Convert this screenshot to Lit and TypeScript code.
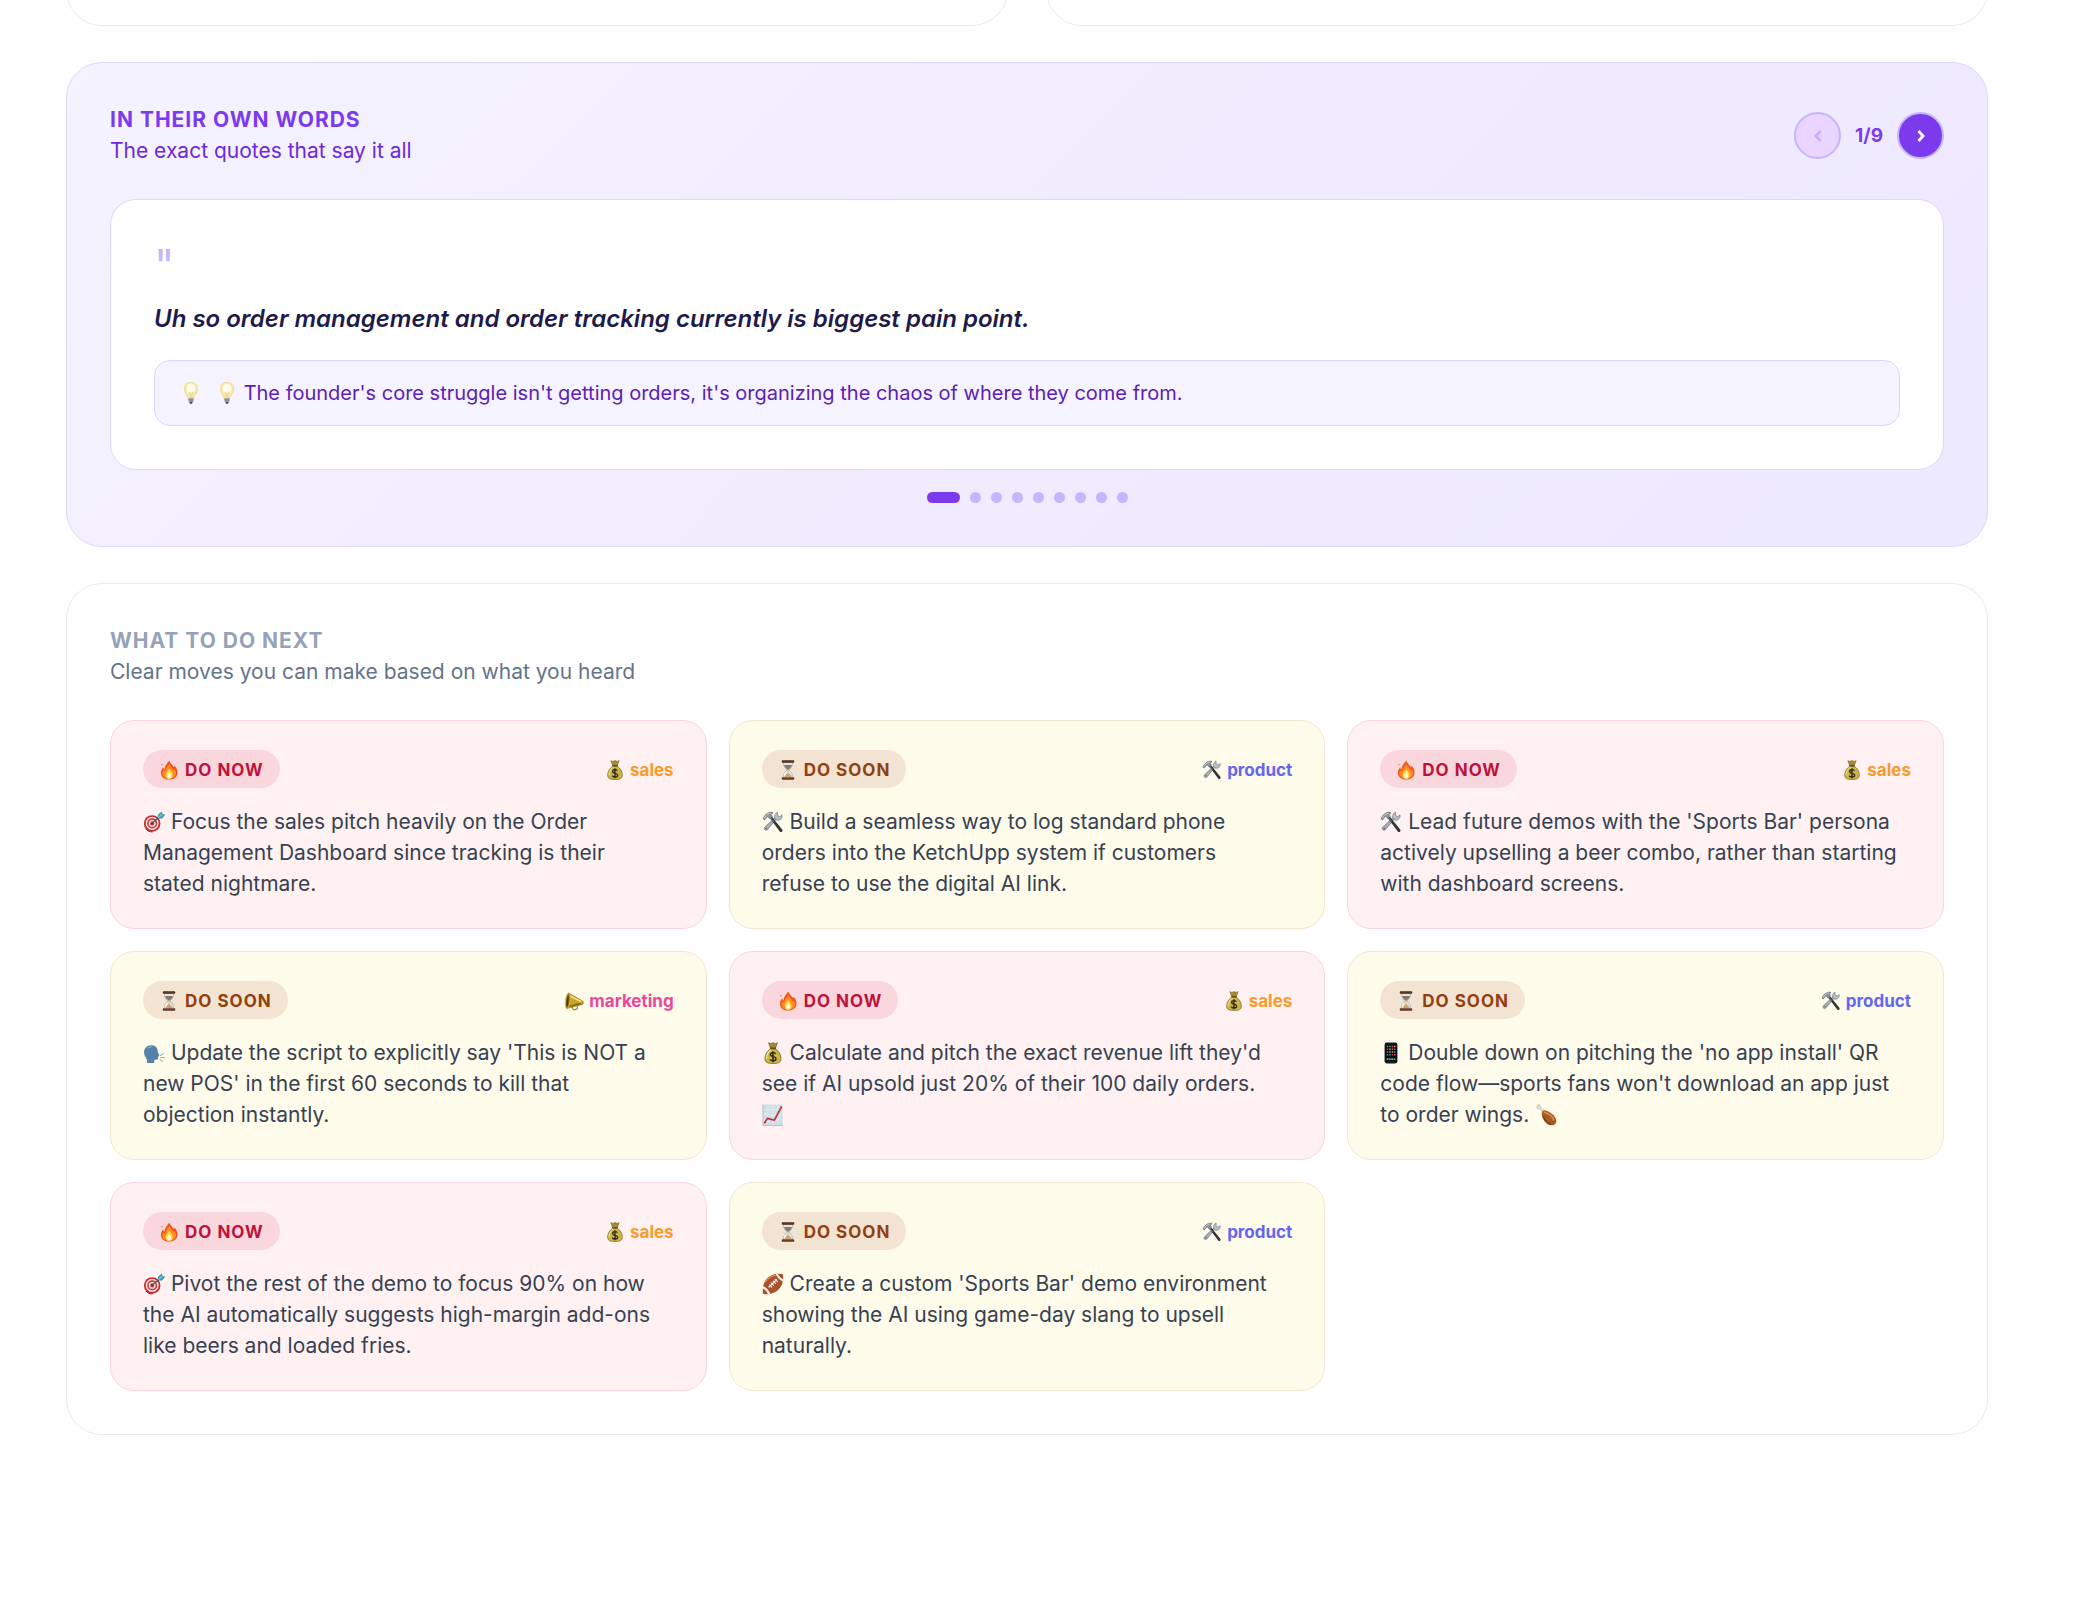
import { LitElement, html, css, svg, nothing } from "lit";
import { customElement, property, state } from "lit/decorators.js";
import { classMap } from "lit/directives/class-map.js";

type Glyph =
  | "fire" | "hourglass" | "bag" | "tools" | "megaphone" | "target"
  | "speaker" | "phone" | "football" | "chart" | "drumstick" | "bulb";

const glyphs: Record<Glyph, unknown> = {
  fire: svg`
    <path d="M12.400.5c.6 3.200 3.600 5.200 5.600 8.300.5-.6.800-1.400.7-2.300 2.300 2.500 3.500 5.500 3.500 8.500 0 5.200-4.300 8.500-9.900 8.500C6.300 23.500 2.300 20 2.300 15.200c0-2.600 1.300-4.700 2.700-6.500.2 1.400.7 2.300 1.500 2.900C6.600 7.500 9.700 4.200 12.400.5z" fill="#f4511e"/>
    <path d="M12.600 4.500c.6 3 3.800 5 5.200 8 .5-.3.900-.9 1-1.500 1.200 1.500 1.700 3 1.700 4.700 0 4.200-3.400 6.800-8.200 6.800s-8.300-2.600-8.300-6.800c0-1.500.5-2.700 1.100-3.800.6 1.200 1.500 1.800 2.500 2-.2-3.700 3.100-6.200 5-9.400z" fill="#ff8f1f"/>
    <path d="M12.200 10c.5 2.500 4.200 4 4.200 8.200 0 2.700-1.700 4.400-4.200 4.400S8 20.900 8 18.200c0-3.400 3.400-5.100 4.200-8.200z" fill="#ffd54a"/>
    <path d="M12.200 14.500c.3 1.500 2.400 2.500 2.400 4.700 0 1.900-1 3-2.400 3s-2.400-1.100-2.400-3c0-2.100 2.100-3.100 2.400-4.700z" fill="#fffbe0"/>
    <circle cx="3.500" cy="5.500" r=".8" fill="#f4511e"/>`,
  hourglass: svg`
    <path d="M6.500 3h11c0 4.500-1.200 6.500-4.300 9 3.100 2.500 4.300 4.500 4.300 9h-11c0-4.500 1.200-6.500 4.300-9-3.100-2.500-4.300-4.500-4.300-9z" fill="#dfe6ea" stroke="#9aa5ab" stroke-width=".7"/>
    <path d="M7.300 6h9.400c-.5 2.200-1.900 3.700-4 5.300l-.7.8-.7-.8C9.200 9.700 7.800 8.200 7.300 6z" fill="#8d7562"/>
    <path d="M12 15.500c2 1.200 3.900 2.500 4.300 5H7.700c.4-2.500 2.300-3.800 4.300-5z" fill="#d9a066"/>
    <path d="M11.700 11.500h.6v5h-.6z" fill="#c08a52"/>
    <path d="M8.500 14.800c-.8 1.400-1.100 3-1.200 4.600h1.500c0-1.900.6-3.500 1.500-5z" fill="#fff"/>
    <rect x="4.500" y=".4" width="15" height="3" rx="1.200" fill="#4a2a1c"/>
    <path d="M6 1.200h12" stroke="#8c5a3c" stroke-width=".7"/>
    <rect x="4.500" y="20.600" width="15" height="3" rx="1.200" fill="#5d3320"/>
    <path d="M6 21.400h12" stroke="#b0754d" stroke-width=".7"/>`,
  bag: svg`
    <path d="M7 .7l2.400 1 2.600-1 2.600 1 2.400-1-2.100 5.800H9.100z" fill="#a38b2f" stroke="#6b5818" stroke-width=".6"/>
    <path d="M9.200 7.500h5.600c3.900 2.700 6 6.400 6 10.700 0 3.700-2.300 5.200-8.800 5.200s-8.800-1.500-8.800-5.200c0-4.300 2.100-8 6-10.700z" fill="#cdb545" stroke="#6f5d1b" stroke-width=".8"/>
    <path d="M9.800 8.500C7 10.800 5 14 4.900 17.800" stroke="#efe08a" stroke-width="1.300" fill="none" stroke-linecap="round"/>
    <rect x="8.500" y="5.900" width="7" height="2" rx="1" fill="#6e4a22"/>
    <path d="M14.900 12.800c-.7-.8-1.700-1.200-2.900-1.200-1.700 0-2.800.8-2.800 2.100 0 3 6 1.500 6 4.500 0 1.400-1.300 2.200-3.100 2.200-1.500 0-2.700-.5-3.400-1.500M12 10v12" fill="none" stroke="#2c2a1c" stroke-width="1.600"/>`,
  tools: svg`
    <path d="M15.700 8.500L6.200 20.200c-.8 1-2.300 1.200-3.200.4-.9-.8-.8-2.200.1-3.100L14 7.300z" fill="#a4adb3" stroke="#5c656b" stroke-width=".6"/>
    <path d="M14 7.800c-.9-2.600.4-5.600 3-6.600l-.1 3.400 2.300 1.500 2.700-1.800c.5 2.800-1.200 5.400-4 5.700-1.700.2-3.100-.6-3.900-2.200z" fill="#b5bdc2" stroke="#626b70" stroke-width=".6"/>
    <circle cx="4.700" cy="19" r=".8" fill="#4b5358"/>
    <path d="M8.400 7.500l2-1.800L22 20.200c.6.900.4 1.700-.2 2.300-.7.600-1.700.6-2.400-.2z" fill="#33373a"/>
    <path d="M9.300 7.300l3.700 4.600" stroke="#777f84" stroke-width="1"/>
    <path d="M1.200 8.600C2.500 4.500 6 1.300 11 1.200l1 1-2.200 1.500 1.700 2.300-2.800 2.600-2.300-2.500c-1.300.3-1.900 1-2.300 2L2.800 9.700z" fill="#8c969c" stroke="#50595e" stroke-width=".6"/>
    <path d="M2.600 7.700C4.100 4.600 6.600 2.700 9.600 2.300" stroke="#dbe1e4" stroke-width=".9" fill="none"/>`,
  megaphone: svg`
    <path d="M9.500 17.500l1 3.700c.3 1 1.400 1.500 2.700 1.100l2-.6c1-.4 1.300-1.200 1-2.300l-.6-2" fill="none" stroke="#a3832a" stroke-width="1.500"/>
    <path d="M5.500 2.500L22.300 12c1.300 1 1.200 3.600-.3 4.100L3 21z" fill="#c9a227" stroke="#75590f" stroke-width=".7"/>
    <path d="M7 6l14 7" stroke="#f5dd7d" stroke-width="2"/>
    <path d="M5.500 18.500L20.500 15" stroke="#806312" stroke-width="1.600"/>
    <ellipse cx="4.500" cy="11.800" rx="2.700" ry="9.500" transform="rotate(7 4.500 11.800)" fill="#8c6c17" stroke="#e0bf4b" stroke-width="1"/>
    <ellipse cx="4.300" cy="12.300" rx="1.100" ry="6" transform="rotate(7 4.300 12.300)" fill="#4f3c0c"/>`,
  target: svg`
    <circle cx="10" cy="13.500" r="9" fill="#c9252d"/>
    <circle cx="10" cy="13.500" r="7.100" fill="#f5e9e6"/>
    <circle cx="10" cy="13.500" r="5.500" fill="#d2323a"/>
    <circle cx="10" cy="13.500" r="3.800" fill="#f5e9e6"/>
    <circle cx="10" cy="13.500" r="2.200" fill="#c9252d"/>
    <path d="M3 19.500c1.700 2.300 4.500 3.500 7.400 3.300" stroke="#7e1219" stroke-width="1" fill="none"/>
    <path d="M10 13.500l8-7.200" stroke="#3c5860" stroke-width="1.300"/>
    <path d="M16.300 7.800l.6-4L20.500 1l.3 2.700 2.900.4-3 3.700z" fill="#3fa9bd" stroke="#237a8d" stroke-width=".6"/>
    <path d="M16.500 7.600l4-3.700" stroke="#bfe9f0" stroke-width=".8"/>`,
  speaker: svg`
    <path d="M9.300 3.500c4.300 0 6.700 2.700 6.700 6.200l.1 1.500 1.700 2.700c.3.500.1.900-.5 1.100l-.7.200.3 1-.7.800.2.700c-.1 1.500-1.200 2-3.900 1.500l-.3 3.600H4.500c.3-2.700-.2-4-1.500-5.900C1.700 15 1.200 13 1.200 11.200c0-4.600 3.300-7.700 8.100-7.700z" fill="#5681a8"/>
    <path d="M5.300 6.600c1.200-1 2.600-1.400 4.200-1.300" stroke="#7da4c5" stroke-width="1.400" fill="none" stroke-linecap="round"/>
    <path d="M19 14.700l3-1.700M19.200 17h3.900M18.700 19.200l2.900 2" stroke="#7d97ab" stroke-width="1" stroke-linecap="round"/>`,
  phone: svg`
    <rect x="5" y=".6" width="14" height="22.800" rx="2.300" fill="#15171a"/>
    <rect x="6.300" y="2.800" width="11.400" height="17.600" fill="#08090c"/>
    <g>
      <path d="M7.400 4h1.600v1.600H7.400zM12.800 7h1.600v1.600h-1.600zM10.100 13h1.600v1.600h-1.600z" fill="#4bb35a"/>
      <path d="M10.100 4h1.600v1.600h-1.600zM15.300 10h1.600v1.600h-1.600zM7.400 13h1.600v1.600H7.400z" fill="#4a90d9"/>
      <path d="M12.800 4h1.600v1.600h-1.600zM7.400 10h1.600v1.600H7.400zM15.300 13h1.600v1.600h-1.600z" fill="#d65a9a"/>
      <path d="M15.300 4h1.600v1.600h-1.600zM10.100 7h1.600v1.600h-1.600zM12.800 10h1.600v1.600h-1.600z" fill="#e2a63a"/>
      <path d="M7.400 7h1.600v1.600H7.400zM15.300 7h1.600v1.600h-1.600zM12.800 13h1.600v1.600h-1.600z" fill="#d4473e"/>
      <path d="M10.100 10h1.600v1.600h-1.600z" fill="#a9b4bf"/>
    </g>
    <path d="M7.200 17.800h2v1.900h-2zM12.200 17.800h2v1.900h-2z" fill="#3fc46a"/>
    <path d="M9.700 17.800h2v1.900h-2zM14.800 17.800h2v1.900h-2z" fill="#3fa6c4"/>`,
  football: svg`
    <path d="M1 22.500C-.3 13 4 3.500 14.500 1.200c3.200-.7 6.200-.6 8.300.1C24.500 11 20 20.300 9.700 22.700c-3.400.8-6.700.7-8.700-.2z" fill="#a9512c"/>
    <path d="M4 9.500C6.800 5.500 10.500 3.200 15.500 2.500" stroke="#cf8258" stroke-width="1.700" fill="none" stroke-linecap="round"/>
    <path d="M1 14.200c3.500 1.200 6.700 4.400 8 8.600l-2.500.3c-1.100-3-3.200-5.200-5.700-6.300z" fill="#f4efe9"/>
    <path d="M15 1.200c1.300 3.600 4.300 6.700 7.800 8l.3-2.400c-2.600-1.200-4.600-3.200-5.700-5.900z" fill="#f4efe9"/>
    <path d="M7.500 15.500l8.500-8.300M8 12.800l2.600 2.600M10.100 10.800l2.600 2.600M12.200 8.800l2.600 2.600M14.200 6.800l2.600 2.600" stroke="#fff" stroke-width="1.100" stroke-linecap="round"/>`,
  chart: svg`
    <rect x="1" y=".6" width="21.500" height="22.800" rx=".6" fill="#cfdfe6"/>
    <path d="M1 6.200h21.500M1 11.800h21.500M1 17.400h21.500M6.400.6v22.800M11.800.6v22.800M17.200.6v22.800" stroke="#e4eef2" stroke-width=".8"/>
    <path d="M1 .6v22.800h21.500" stroke="#9fb2bb" stroke-width=".8" fill="none"/>
    <path d="M2.500 21l3.500-5.300 7.500 2L21.500 2.500" fill="none" stroke="#c22d35" stroke-width="1.800" stroke-linejoin="round"/>`,
  drumstick: svg`
    <path d="M8.800 9.200L4.600 4.700c-.9.600-2.200.3-2.600-.6-.3-.8.100-1.600.9-1.800-.1-.9.600-1.700 1.500-1.600 1 .1 1.600 1.200 1.200 2.300l4.900 4.500z" fill="#e9e2d6" stroke="#a9a195" stroke-width=".6"/>
    <path d="M7.300 9.700c.5-1.800 2.200-3.100 4-2.700 4.500 1 11.300 5.300 11.900 11 .3 3-1.700 5.200-5 5.200C12 23.200 7.200 15.500 7.300 9.700z" fill="#a85a22"/>
    <path d="M10.300 9c4 1.200 8.700 4.300 9.800 8" stroke="#d99150" stroke-width="1.900" fill="none" stroke-linecap="round"/>
    <path d="M9 13.500c1.400 4 4.500 8 8.600 8.700" stroke="#74370f" stroke-width="1.300" fill="none"/>`,
  bulb: svg`
    <path d="M12 .4c4.500 0 7.300 3.100 7.300 7.200 0 4.800-3.800 6.300-4.300 10.400H9C8.500 13.900 4.700 12.400 4.700 7.600 4.700 3.500 7.500.4 12 .4z" fill="#faeaaa" stroke="#e9d384" stroke-width=".8"/>
    <ellipse cx="12" cy="7" rx="4.700" ry="5" fill="#fffdf0"/>
    <path d="M10.500 10.500l.8 7M13.500 10.500l-.8 7" stroke="#dcc36b" stroke-width=".7"/>
    <path d="M9 17.800h6l-.5 3.700h-5z" fill="#a6a9ad"/>
    <path d="M9.200 18.900h5.600M9.500 20.400h5" stroke="#73777c" stroke-width=".7"/>
    <path d="M10 21.500h4l-.9 2.200h-2.200z" fill="#44474c"/>`,
};

const glyph = (name: Glyph, size: "large" | "small") => html`
  <svg class="glyph ${size}" viewBox="0 0 24 24" aria-hidden="true">${glyphs[name]}</svg>`;

const glyphStyles = css`
  .glyph { flex: none; }
  .glyph.large { width: 22px; height: 22px; vertical-align: -4px; }
  .glyph.small { width: 20px; height: 20px; }
`;

interface Move {
  urgency: "now" | "soon";
  area: "sales" | "product" | "marketing";
  lead: Glyph;
  text: string;
  tail?: Glyph;
}

const areaGlyph: Record<Move["area"], Glyph> = {
  sales: "bag",
  product: "tools",
  marketing: "megaphone",
};

const moves: Move[] = [
  { urgency: "now", area: "sales", lead: "target", text: "Focus the sales pitch heavily on the Order Management Dashboard since tracking is their stated nightmare." },
  { urgency: "soon", area: "product", lead: "tools", text: "Build a seamless way to log standard phone orders into the KetchUpp system if customers refuse to use the digital AI link." },
  { urgency: "now", area: "sales", lead: "tools", text: "Lead future demos with the 'Sports Bar' persona actively upselling a beer combo, rather than starting with dashboard screens." },
  { urgency: "soon", area: "marketing", lead: "speaker", text: "Update the script to explicitly say 'This is NOT a new POS' in the first 60 seconds to kill that objection instantly." },
  { urgency: "now", area: "sales", lead: "bag", text: "Calculate and pitch the exact revenue lift they'd see if AI upsold just 20% of their 100 daily orders.", tail: "chart" },
  { urgency: "soon", area: "product", lead: "phone", text: "Double down on pitching the 'no app install' QR code flow—sports fans won't download an app just to order wings.", tail: "drumstick" },
  { urgency: "now", area: "sales", lead: "target", text: "Pivot the rest of the demo to focus 90% on how the AI automatically suggests high-margin add-ons like beers and loaded fries." },
  { urgency: "soon", area: "product", lead: "football", text: "Create a custom 'Sports Bar' demo environment showing the AI using game-day slang to upsell naturally." },
];

@customElement("move-card")
class MoveCard extends LitElement {
  @property({ attribute: false }) move!: Move;

  static styles = [glyphStyles, css`
    :host { display: block; }
    .card {
      box-sizing: border-box;
      height: 100%;
      padding: 29px 32px;
      border: 1px solid;
      border-radius: 24px;
    }
    .card.now { background: #fff1f2; border-color: #fcd5dd; }
    .card.soon { background: #fffbeb; border-color: #f3e6cf; }
    .top {
      display: flex;
      align-items: center;
      justify-content: space-between;
      margin-bottom: 18px;
    }
    .badge, .area {
      box-sizing: border-box;
      display: flex;
      align-items: center;
      height: 38px;
      padding-top: 2px;
      font-size: 17px;
      font-weight: 700;
    }
    .badge {
      gap: 6px;
      padding-inline: 16px;
      border-radius: 19px;
      letter-spacing: 1px;
    }
    .now .badge { background: #f9d7dc; color: #be123c; }
    .soon .badge { background: #f2e3d2; color: #92400e; }
    .area { gap: 5px; }
    .area.sales { color: #f99b2c; }
    .area.product { color: #6366f1; }
    .area.marketing { color: #ec4899; }
    .body { margin: 0; padding-right: 12px; font-size: 21px; line-height: 31px; color: #374151; }
  `];

  render() {
    const { urgency, area, lead, text, tail } = this.move;
    return html`
      <article class=${classMap({ card: true, [urgency]: true })}>
        <div class="top">
          <span class="badge">
            ${glyph(urgency === "now" ? "fire" : "hourglass", "small")}
            <span>${urgency === "now" ? "DO NOW" : "DO SOON"}</span>
          </span>
          <span class=${classMap({ area: true, [area]: true })}>
            ${glyph(areaGlyph[area], "small")}<span>${area}</span>
          </span>
        </div>
        <p class="body">${glyph(lead, "large")} ${text} ${tail ? glyph(tail, "large") : nothing}</p>
      </article>`;
  }
}

@customElement("app-root")
class AppRoot extends LitElement {
  @state() private current = 0;
  private readonly total = 9;

  static styles = [glyphStyles, css`
    :host {
      display: block;
      overflow: hidden;
      min-height: 100vh;
      background: #fefefe;
      font-family: Inter, "Liberation Sans", sans-serif;
    }
    .page {
      display: flex;
      flex-direction: column;
      gap: 36px;
      padding: 0 88px 36px 66px;
    }
    .previous {
      display: grid;
      grid-template-columns: 1fr 1fr;
      gap: 38px;
      margin-top: -54px;
    }
    .panel {
      box-sizing: border-box;
      border: 1px solid #e8ebee;
      border-radius: 36px;
      background: #ffffff;
      padding: 43px;
    }
    .previous .panel { padding: 39px; }
    .quotes {
      border-color: #ddd6fe;
      background: linear-gradient(135deg, #f5f3ff, #f1ebfe 50%, #ede9fe);
    }
    .head {
      display: flex;
      justify-content: space-between;
      align-items: center;
      margin-bottom: 35px;
    }
    .title {
      margin: 0 0 5px;
      font-size: 21px;
      line-height: 27px;
      font-weight: 700;
      letter-spacing: 1px;
      color: #94a3b8;
    }
    .subtitle { margin: 0; font-size: 21px; line-height: 26px; color: #64748b; }
    .quotes .title { color: #7c3aed; }
    .quotes .subtitle { color: #6d28d9; }
    .pager { display: flex; align-items: center; gap: 14px; }
    .count { font-size: 19px; font-weight: 700; color: #7c3aed; }
    .step {
      display: grid;
      place-items: center;
      width: 47px;
      height: 47px;
      padding: 0;
      border: 2px solid #c4b5fd;
      border-radius: 50%;
      background: #7c3aed;
      color: #ffffff;
    }
    .step:disabled { background: #e9d5ff; color: #c9aef8; }
    .chevron { width: 10px; height: 14px; }
    .quote {
      padding: 43px;
      border: 1px solid #ddd6fe;
      border-radius: 26px;
      background: #ffffff;
    }
    .mark { height: 42px; margin-bottom: 14px; font-size: 44px; line-height: 45px; color: #c4b5fd; }
    .said {
      margin: 0 0 22px;
      font-size: 24px;
      line-height: 39px;
      font-weight: 600;
      font-style: italic;
      color: #1e1b4b;
    }
    .insight {
      display: flex;
      align-items: center;
      gap: 14px;
      padding: 16px 25px;
      border: 1px solid #ddd6fe;
      border-radius: 16px;
      background: #f5f3ff;
      font-size: 20px;
      line-height: 32px;
      color: #5b21b6;
    }
    .dots { display: flex; justify-content: center; gap: 10px; margin-top: 22px; }
    .dot {
      width: 11px;
      height: 11px;
      padding: 0;
      border: 0;
      border-radius: 6px;
      background: #c4b5fd;
    }
    .dot.active { width: 33px; background: #7c3aed; }
    .moves { display: grid; grid-template-columns: repeat(3, 1fr); gap: 22px; }
  `];

  private go(index: number) {
    this.current = Math.max(0, Math.min(this.total - 1, index));
  }

  render() {
    return html`
      <main class="page">
        <div class="previous">
          <div class="panel"></div>
          <div class="panel"></div>
        </div>

        <section class="panel quotes">
          <header class="head">
            <div>
              <h2 class="title">IN THEIR OWN WORDS</h2>
              <p class="subtitle">The exact quotes that say it all</p>
            </div>
            <div class="pager">
              <button class="step" aria-label="Previous quote" ?disabled=${this.current === 0}
                @click=${() => this.go(this.current - 1)}>
                <svg class="chevron" viewBox="0 0 10 14" aria-hidden="true">
                  <path d="M7.500 3L3 8l4.500 5" fill="none" stroke="currentColor" stroke-width="2.800"/>
                </svg>
              </button>
              <span class="count">${this.current + 1}/${this.total}</span>
              <button class="step" aria-label="Next quote" ?disabled=${this.current === this.total - 1}
                @click=${() => this.go(this.current + 1)}>
                <svg class="chevron" viewBox="0 0 10 14" aria-hidden="true">
                  <path d="M2.500 3L7 8l-4.500 5" fill="none" stroke="currentColor" stroke-width="2.800"/>
                </svg>
              </button>
            </div>
          </header>
          <div class="quote">
            <div class="mark" aria-hidden="true">"</div>
            <p class="said">Uh so order management and order tracking currently is biggest pain point.</p>
            <div class="insight">
              ${glyph("bulb", "large")}
              <span>${glyph("bulb", "large")} The founder's core struggle isn't getting orders, it's organizing the chaos of where they come from.</span>
            </div>
          </div>
          <nav class="dots" aria-label="Quotes">
            ${Array.from({ length: this.total }, (_, i) => html`
              <button class=${classMap({ dot: true, active: i === this.current })}
                aria-label="Quote ${i + 1}" @click=${() => this.go(i)}></button>`)}
          </nav>
        </section>

        <section class="panel">
          <header class="head">
            <div>
              <h2 class="title">WHAT TO DO NEXT</h2>
              <p class="subtitle">Clear moves you can make based on what you heard</p>
            </div>
          </header>
          <div class="moves">
            ${moves.map((move) => html`<move-card .move=${move}></move-card>`)}
          </div>
        </section>
      </main>`;
  }
}
